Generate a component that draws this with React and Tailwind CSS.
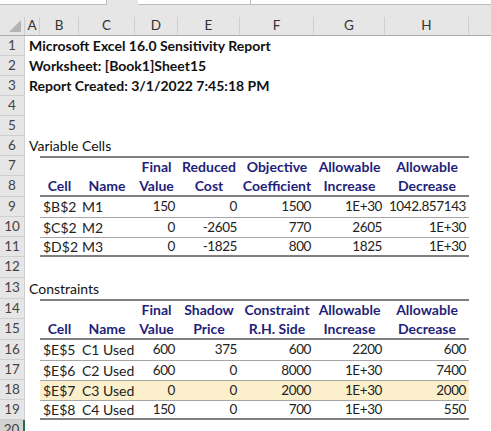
import React from 'react';

const cols = [
  { id: 'A', w: 15 },
  { id: 'B', w: 39 },
  { id: 'C', w: 56 },
  { id: 'D', w: 43 },
  { id: 'E', w: 62 },
  { id: 'F', w: 74 },
  { id: 'G', w: 71 },
  { id: 'H', w: 84 },
];
const tableWidths = [39, 56, 43, 62, 74, 71, 84];

function RowNum({ n, selected }) {
  return (
    <div
      className={`w-[25px] shrink-0 h-full flex items-center justify-center border-b border-r box-border text-[13.5px] text-[#444] ${
        selected ? 'bg-[#d2d2d2] border-r-[#217346] border-r-2 border-b-[#c6c6c6]' : 'bg-[#e6e6e6] border-[#cfcfcf]'
      }`}
    >
      {n}
    </div>
  );
}

function Row({ n, children, selected, tall }) {
  return (
    <div className={`flex ${tall ? 'h-[21px]' : 'h-5'}`}>
      <RowNum n={n} selected={selected} />
      <div className="flex-1 relative flex items-center">{children}</div>
    </div>
  );
}

function TitleRow({ n, text, bold = true, tall }) {
  return (
    <Row n={n} tall={tall}>
      <span className={`pl-[4px] whitespace-nowrap text-[#111] ${bold ? 'font-bold' : ''}`}>{text}</span>
    </Row>
  );
}

// cells: 7 strings for columns B..H; kind: 'head' | 'data'
function TableRow({ n, cells, kind, top, bottom, thinTop, highlight, tall }) {
  const border = [
    top ? 'border-t-2 border-t-[#7f7f7f]' : thinTop ? 'border-t border-t-[#a6a6a6]' : '',
    bottom ? 'border-b-2 border-b-[#7f7f7f]' : '',
    highlight ? 'bg-[#fcefcb]' : '',
  ].join(' ');
  return (
    <Row n={n} tall={tall}>
      <div className="w-[15px] shrink-0" />
      <div className={`flex h-full box-border items-center w-[429px] ${border}`}>
        {cells.map((c, i) => {
          let align;
          if (kind === 'head') align = 'justify-center font-bold text-[#1f1f7a]';
          else if (i < 2) align = 'justify-start pl-[3px] text-[#222]';
          else align = 'justify-end pr-[3px] text-[#222] text-[13.5px] tracking-[-0.4px]';
          return (
            <div
              key={i}
              style={{ width: tableWidths[i] }}
              className={`flex shrink-0 whitespace-nowrap ${align}`}
            >
              {c}
            </div>
          );
        })}
      </div>
    </Row>
  );
}

export default function App() {
  return (
    <div
      className="w-[491px] h-[431px] overflow-hidden bg-white text-[14px] leading-none"
      style={{ fontFamily: 'Lato, "Open Sans", sans-serif' }}
    >
      {/* formula bar strip */}
      <div className="h-[17px] bg-[#e6e6e6] flex">
        <div className="w-[107px] h-[5px] bg-white border-b border-r border-[#bdbdbd] box-border" />
        <div className="w-[31px]" />
        <div className="w-[112px] h-[5px] bg-white border-b border-[#bdbdbd] box-border" />
        <div className="flex-1 h-[5px] bg-white border-b border-l border-[#bdbdbd] box-border" />
      </div>
      {/* column headers */}
      <div className="flex h-[19px] bg-[#e6e6e6] border-b border-[#ababab] box-border text-[13.5px] text-[#333]">
        <div className="w-[25px] shrink-0 relative border-r border-[#cfcfcf]">
          <svg className="absolute right-[3px] bottom-[3px]" width="12" height="12" viewBox="0 0 12 12">
            <polygon points="12,0 12,12 0,12" fill="#b4b4b4" />
          </svg>
        </div>
        {cols.map((c) => (
          <div
            key={c.id}
            style={{ width: c.w }}
            className="shrink-0 flex items-center justify-center border-r border-[#cfcfcf]"
          >
            {c.id}
          </div>
        ))}
        <div className="flex-1" />
      </div>

      <TitleRow n={1} text="Microsoft Excel 16.0 Sensitivity Report" />
      <TitleRow n={2} text="Worksheet: [Book1]Sheet15" />
      <TitleRow n={3} text="Report Created: 3/1/2022 7:45:18 PM" />
      <Row n={4} />
      <Row n={5} />
      <TitleRow n={6} text="Variable Cells" bold={false} />
      <TableRow n={7} kind="head" top cells={['', '', 'Final', 'Reduced', 'Objective', 'Allowable', 'Allowable']} />
      <TableRow n={8} kind="head" bottom tall cells={['Cell', 'Name', 'Value', 'Cost', 'Coefficient', 'Increase', 'Decrease']} />
      <TableRow n={9} kind="data" cells={['$B$2', 'M1', '150', '0', '1500', '1E+30', '1042.857143']} />
      <TableRow n={10} kind="data" thinTop cells={['$C$2', 'M2', '0', '-2605', '770', '2605', '1E+30']} />
      <TableRow n={11} kind="data" thinTop bottom cells={['$D$2', 'M3', '0', '-1825', '800', '1825', '1E+30']} />
      <Row n={12} tall />
      <TitleRow n={13} text="Constraints" bold={false} tall />
      <TableRow n={14} kind="head" top cells={['', '', 'Final', 'Shadow', 'Constraint', 'Allowable', 'Allowable']} />
      <TableRow n={15} kind="head" bottom tall cells={['Cell', 'Name', 'Value', 'Price', 'R.H. Side', 'Increase', 'Decrease']} />
      <TableRow n={16} kind="data" cells={['$E$5', 'C1 Used', '600', '375', '600', '2200', '600']} />
      <TableRow n={17} kind="data" thinTop cells={['$E$6', 'C2 Used', '600', '0', '8000', '1E+30', '7400']} />
      <TableRow n={18} kind="data" thinTop highlight cells={['$E$7', 'C3 Used', '0', '0', '2000', '1E+30', '2000']} />
      <TableRow n={19} kind="data" thinTop bottom cells={['$E$8', 'C4 Used', '150', '0', '700', '1E+30', '550']} />
      <Row n={20} selected />
    </div>
  );
}
